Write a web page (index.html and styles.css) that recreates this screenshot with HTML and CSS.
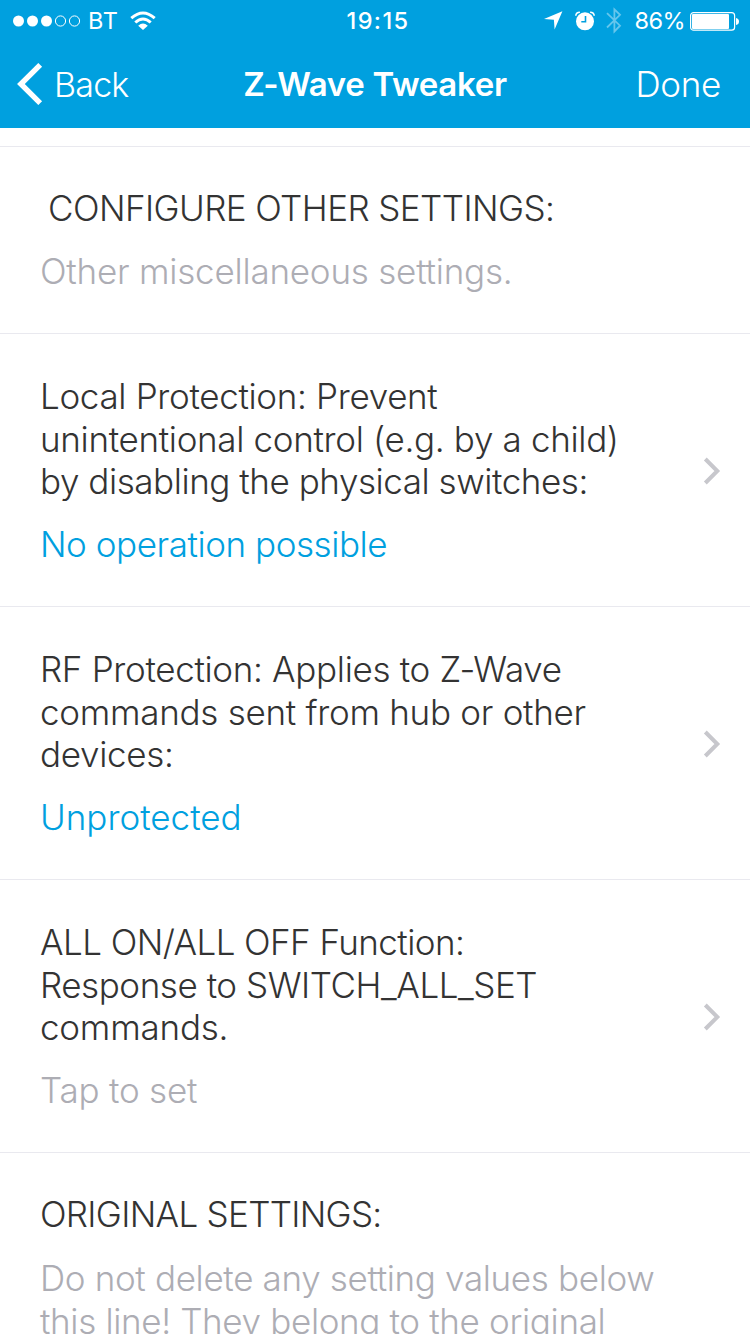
FILE: index.html
```html
<!DOCTYPE html>
<html lang="en">
<head>
<meta charset="utf-8">
<title>Z-Wave Tweaker</title>
<link rel="stylesheet" href="styles.css">
</head>
<body>
<div class="screen">
  <header class="header">
    <div class="status">
      <div class="status-left">
        <svg class="signal" width="68" height="12" viewBox="0 0 68 12" fill="#fff"><circle cx="5.5" cy="6" r="5.5"/><circle cx="19.5" cy="6" r="5.5"/><circle cx="33.5" cy="6" r="5.5"/><g fill="none" stroke="#fff"><circle cx="47.5" cy="6" r="5.1"/><circle cx="61.5" cy="6" r="5.1"/></g></svg>
        <span class="carrier">BT</span>
        <svg class="wifi" width="26" height="20" viewBox="0 0 26 20" fill="none" stroke="#fff" stroke-width="3"><path d="M1.3 7.2Q13-3.2 24.7 7.2M5.3 11.5Q13 4.6 20.7 11.5"/><path d="M8.2 14.7Q13 10.3 17.8 14.7L13 19Z" fill="#fff" stroke="none"/></svg>
      </div>
      <span class="clock">19:15</span>
      <div class="status-right">
        <svg class="location" width="19" height="19" viewBox="0 0 19 19" fill="#fff"><path d="M18.4.3L10.6 18.5L9.9 8.7L0 8Z"/></svg>
        <svg class="alarm" width="20" height="20" viewBox="0 0 20 20"><circle cx="10" cy="10.3" r="9" fill="#fff"/><path d="M.8 4.8Q1 1.3 4.9 1.3M15.1 1.3Q19 1.3 19.2 4.8" fill="none" stroke="#fff" stroke-width="1.6"/><path d="M10.5 5V10.8H6.3" fill="none" stroke="#00a0df" stroke-width="1.6"/></svg>
        <svg class="bluetooth" width="16" height="27" viewBox="0 0 16 27" fill="none" stroke="#66c6ec" stroke-width="1.8"><path d="M1 6.2L14 18.7L8.4 24.5V2.4L14 7.8L1 20.5"/></svg>
        <span class="percent">86%</span>
        <svg class="battery" width="50" height="20" viewBox="0 0 50 20"><rect x=".6" y="1.6" width="44" height="17.6" rx="3" fill="none" stroke="#fff" stroke-width="1.2"/><rect x="2" y="3" width="37" height="15" rx="1" fill="#fff"/><path d="M46 7Q49 7.5 49 10.5T46 14Z" fill="#fff"/></svg>
      </div>
    </div>
    <nav class="nav">
      <a class="back"><svg width="26" height="42" viewBox="0 0 26 42" fill="none" stroke="#fff" stroke-width="5.4"><path d="M23.2 1.9L3.9 21L23.2 40.1"/></svg><span class="back-text">Back</span></a>
      <h1 class="title">Z-Wave Tweaker</h1>
      <a class="done">Done</a>
    </nav>
  </header>
  <main class="list">
    <section class="row heading">
      <div class="copy"><div class="label indent caps">CONFIGURE OTHER SETTINGS:</div><div class="value muted loose">Other miscellaneous settings.</div></div>
    </section>
    <section class="row">
      <div class="copy"><div class="label"><span>Local Protection: Prevent</span><span>unintentional control (e.g. by a child)</span><span class="tight">by disabling the physical switches:</span></div><div class="value tight">No operation possible</div></div>
      <svg class="chevron" width="18" height="30" viewBox="0 0 18 30"><path d="M2.3 4L14.3 16L2.3 28"/></svg>
    </section>
    <section class="row">
      <div class="copy"><div class="label"><span>RF Protection: Applies to Z-Wave</span><span class="medium">commands sent from hub or other</span><span>devices:</span></div><div class="value normal">Unprotected</div></div>
      <svg class="chevron" width="18" height="30" viewBox="0 0 18 30"><path d="M2.3 4L14.3 16L2.3 28"/></svg>
    </section>
    <section class="row">
      <div class="copy"><div class="label"><span class="caps">ALL ON/ALL OFF Function:</span><span class="tight">Response to SWITCH_ALL_SET</span><span class="loose">commands.</span></div><div class="value muted loose">Tap to set</div></div>
      <svg class="chevron" width="18" height="30" viewBox="0 0 18 30"><path d="M2.3 4L14.3 16L2.3 28"/></svg>
    </section>
    <section class="row original">
      <div class="copy"><div class="label caps-tight">ORIGINAL SETTINGS:</div><div class="value muted"><span>Do not delete any setting values below</span><span>this line! They belong to the original</span></div></div>
    </section>
  </main>
</div>
</body>
</html>
```
FILE: styles.css
```css
* { box-sizing: border-box; }
body { margin: 0; font-family: Inter, "Liberation Sans", sans-serif; }
svg { display: block; flex: none; }
.screen { width: 750px; height: 1334px; overflow: hidden; background: #fff; }
.header { height: 128px; background: #00a0df; color: #fff; }
.status { height: 40px; display: grid; grid-template-columns: 1fr auto 1fr; align-items: center; padding: 1px 10px 0 13px; font-size: 23.5px; line-height: 38px; }
.status-left, .status-right { display: flex; align-items: center; }
.status-right { justify-content: flex-end; }
.carrier { margin: 0 11px 0 7px; letter-spacing: .8px; }
.clock { padding-left: 3px; font-weight: 500; letter-spacing: 1.4px; }
.location { margin-right: 12px; }
.alarm { margin-right: 11px; }
.bluetooth { margin-right: 13px; }
.percent { margin-right: 5px; letter-spacing: -.6px; }
.nav { height: 88px; display: grid; grid-template-columns: 1fr auto 1fr; align-items: center; padding: 0 29px 0 17px; font-size: 34px; }
.back { display: flex; align-items: center; gap: 11px; font-weight: 300; letter-spacing: -.8px; }
.title { margin: 0; padding-left: 12px; font-size: 33px; font-weight: 600; letter-spacing: -.3px; }
.done { justify-self: end; font-weight: 300; font-size: 35px; letter-spacing: -.3px; }
.list { padding-top: 18px; }
.row { display: flex; align-items: center; justify-content: space-between; border-top: 1px solid #e9e9ef; padding: 41px 29px 40.5px 40px; font-size: 35px; line-height: 42.5px; font-weight: 300; letter-spacing: -.33px; white-space: nowrap; }
.heading { padding-top: 40px; }
.original { padding-top: 40px; }
.row span { display: block; }
.label { color: #333; }
.indent { padding-left: 8px; }
.value { margin-top: 20.5px; color: #00a0df; }
.original .value { margin-top: 21.5px; letter-spacing: -.35px; }
.muted { color: #adadb4; }
.loose { letter-spacing: -.22px; }
.medium { letter-spacing: -.28px; }
.normal { letter-spacing: 0; }
.row .tight { letter-spacing: -.45px; }
.row .caps { letter-spacing: -.57px; }
.caps-tight { letter-spacing: -.7px; }
.chevron { fill: none; stroke: #c7c7cc; stroke-width: 4; }
```
